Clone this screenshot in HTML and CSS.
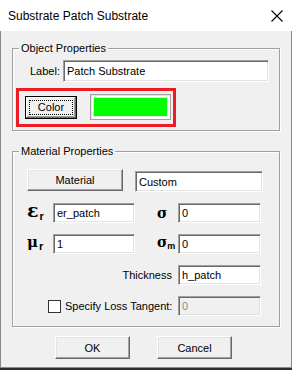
FILE: index.html
```html
<!DOCTYPE html>
<html lang="en"><head>
	<meta charset='utf-8'>
	<title>Substrate Patch Substrate</title>
	<link rel="stylesheet" href="styles.css">
</head><body>
<div class="window">
	<div class="titlebar">
		<span class="title">Substrate Patch Substrate</span>
		<span class="close"><svg width="12" height="12" viewBox="0 0 12 12"><path d="M0.5 0.5 L11.5 11.5 M11.5 0.5 L0.5 11.5" stroke="#000" stroke-width="1.1" fill="none"/></svg></span>
	</div>
	<div class="dialog">
		<fieldset class="group group-object">
			<legend>Object Properties</legend>
			<div class="label-row"><label>Label:</label><input class="field field-label" value="Patch Substrate"></div>
			<div class="highlight">
				<button class="btn btn-default"><span class="focus">Color</span></button>
				<span class="swatch"><span class="swatch-fill"></span></span>
			</div>
		</fieldset>
		<fieldset class="group group-material">
			<legend>Material Properties</legend>
			<div class="material-row"><button class="btn btn-material">Material</button><input class="field field-custom" value="Custom"></div>
			<div class="params">
				<span class="sym sym-eps">ε<sub>r</sub></span><input class="field" value="er_patch">
				<span class="sym2">σ</span><input class="field" value="0">
				<span class="sym sym-mu">μ<sub>r</sub></span><input class="field" value="1">
				<span class="sym2">σ<sub>m</sub></span><input class="field" value="0">
				<label class="thick">Thickness</label><input class="field" value="h_patch">
				<label class="loss"><span class="check"></span>Specify Loss Tangent:</label><input class="field" value="0" disabled>
			</div>
		</fieldset>
		<div class="actions"><button class="btn btn-action">OK</button><button class="btn btn-action">Cancel</button></div>
	</div>
</div>
</body></html>
```

FILE: styles.css
```css
* { box-sizing:border-box }
html, body { margin:0; padding:0 }
body { background:#2e2e2e; font-family:"Liberation Sans", Arial, sans-serif; font-size:11px; color:#000; width:292px; height:370px; overflow:hidden }

.window { width:292px; height:368px; background:#f0f0f0; border:1px solid #8a8a8a; border-top:0 }
.titlebar { height:31px; background:#fff; display:flex; align-items:center; justify-content:space-between; padding:0 9px 0 8px; margin:0 -1px; }
.title { font-size:12px; padding-top:1px }
.close { display:block; width:12px; height:12px; margin-top:1px }
.close svg { display:block }

.dialog { padding:11px 11px 0 11px }

.group { margin:0; padding:0 0 3px 0; border:1px solid #a0a0a0; box-shadow:inset 1px 1px 0 #fff, 1px 1px 0 #fff; }
.group legend { margin-left:6px; padding:0 2px; line-height:13px; font-size:11px }
.group-material { margin-top:14px; padding-bottom:10px }

.field { font-family:"Liberation Sans", Arial, sans-serif; font-size:11px; height:20px; margin:0; padding:0 3px; background:#fff; color:#000;
	border:1px solid; border-color:#a0a0a0 #fff #fff #a0a0a0; box-shadow:inset 1px 1px 0 #696969, inset -1px -1px 0 #e3e3e3; outline:none }
.field:disabled { background:#f0f0f0; color:#8d8d8d }

.label-row { display:flex; align-items:center; margin-top:5px; padding-left:17px }
.label-row label { width:33px }
.field-label { width:206px; height:22px }

.highlight { display:flex; align-items:flex-start; width:160px; height:39px; margin:6px 0 0 3px; border:3px solid #ed1c24; padding:5px 0 0 6px }

.btn { font-family:"Liberation Sans", Arial, sans-serif; font-size:11px; color:#000; background:#f0f0f0; margin:0; padding:0;
	border:1px solid; border-color:#fff #696969 #696969 #fff; box-shadow:inset -1px -1px 0 #a0a0a0, inset 1px 1px 0 #e3e3e3 }
.btn-default { width:52px; height:23px; border:1px solid #000; box-shadow:inset -1px -1px 0 #696969, inset 1px 1px 0 #fff, inset -2px -2px 0 #a0a0a0; padding:3px }
.focus { display:flex; align-items:center; justify-content:center; height:100%; border:1px dotted #000; padding-bottom:1px }
.swatch { display:block; width:81px; height:26px; margin:-2px 0 0 13px; border:1px solid #a0a0a0; background:#fff; padding:2px; box-shadow:inset 1px 1px 0 #e3e3e3 }
.swatch-fill { display:block; height:100%; background:#00ff00; border:1px solid #e3e3e3 }

.material-row { display:flex; align-items:flex-start; margin-top:11px; padding-left:14px }
.btn-material { width:96px; height:22px }
.field-custom { width:128px; height:21px; margin:2px 0 0 12px }

.params { display:grid; grid-template-columns:26px 82px 43px 83px; grid-auto-rows:20px; row-gap:11px; align-items:center; margin-top:11px; padding-left:14px }
.sym { font-family:"DejaVu Serif", serif; font-size:19px; font-weight:bold; line-height:20px; white-space:nowrap }
.sym sub, .sym2 sub { font-family:"Liberation Sans", Arial, sans-serif; font-size:11px; font-weight:bold; vertical-align:-3px; margin-left:1px }
.sym-mu { font-size:15px }
.sym2 { font-family:"DejaVu Serif", serif; font-size:14px; font-weight:bold; padding-left:22px; line-height:20px; white-space:nowrap }
.sym2 sub { font-size:9px; vertical-align:-2px; margin-left:0 }
.thick { grid-column:1 / 4; text-align:right; padding-right:6px }
.loss { grid-column:1 / 4; display:flex; align-items:center; padding-left:21px }
.check { width:13px; height:13px; margin-right:4px; background:#fff; border:1px solid #333 }

.actions { display:flex; gap:27px; margin-top:9px; padding-left:43px }
.btn-action { width:75px; height:23px }
```
